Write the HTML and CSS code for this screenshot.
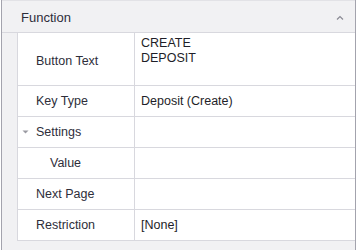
FILE: index.html
```html
<!DOCTYPE html>
<html lang="en">

<head>
    <meta charset="UTF-8">
    <meta name="viewport" content="width=device-width, initial-scale=1.0">
    <title>Function</title>
    <link rel="stylesheet" href="styles.css">
</head>

<body>
    <div class="panel">
        <div class="panel-header">
            <span>Function</span>
            <svg class="collapse" width="8" height="5" viewBox="0 0 8 5">
                <path d="M1 4.5 L4 1.5 L7 4.5" fill="none" stroke="#8a8a94" stroke-width="1.2" />
            </svg>
        </div>

        <div class="panel-body">
            <div class="gutter"></div>
            <div class="rows">
                <div class="row tall">
                    <div class="label">Button Text</div>
                    <div class="value multi">CREATE<br>DEPOSIT</div>
                </div>
                <div class="row">
                    <div class="label">Key Type</div>
                    <div class="value">Deposit (Create)</div>
                </div>
                <div class="row">
                    <div class="label group">
                        <svg class="expander" width="7" height="4" viewBox="0 0 7 4">
                            <path d="M0.5 0.5 L6.5 0.5 L3.5 3.5 Z" fill="#9a9aa2" />
                        </svg>
                        Settings
                    </div>
                    <div class="value"></div>
                </div>
                <div class="row">
                    <div class="label child">Value</div>
                    <div class="value"></div>
                </div>
                <div class="row">
                    <div class="label">Next Page</div>
                    <div class="value"></div>
                </div>
                <div class="row">
                    <div class="label">Restriction</div>
                    <div class="value">[None]</div>
                </div>
            </div>
        </div>

        <div class="panel-footer"></div>
    </div>
</body>

</html>
```

FILE: styles.css
```css
body {
    font-family: "Liberation Sans", Arial, sans-serif;
    font-size: 12.5px;
    color: #2e2e3a;
    background-color: #fff;
    margin: 0;
    padding: 0;
}

.panel {
    width: 355px;
    margin-left: 1px;
    box-sizing: border-box;
    border-left: 1px solid #a3a3ad;
    border-right: 1px solid #a3a3ad;
    background-color: #f1f1f3;
}

.panel-header {
    height: 33px;
    display: flex;
    justify-content: space-between;
    align-items: center;
    padding: 2px 11px 0 19px;
    box-sizing: border-box;
    border-top: 1px solid #e2e2e6;
    border-bottom: 1px solid #d8d8de;
    font-size: 13px;
}

.collapse {
    margin-top: -1px;
}

.panel-body {
    display: flex;
}

.gutter {
    width: 15px;
    flex-shrink: 0;
}

.rows {
    flex: 1;
    background-color: #fff;
}

.row {
    display: flex;
    height: 31px;
    box-sizing: border-box;
    border-bottom: 1px solid #d8d8de;
}

.row.tall {
    height: 53px;
}

.row.tall .label {
    padding-top: 3px;
}

.label {
    width: 118px;
    flex-shrink: 0;
    box-sizing: border-box;
    border-left: 1px solid #d8d8de;
    border-right: 1px solid #d8d8de;
    padding-left: 18px;
    display: flex;
    align-items: center;
}

.label.group {
    padding-left: 4px;
}

.expander {
    margin-right: 7px;
}

.label.child {
    padding-left: 32px;
}

.value {
    flex: 1;
    padding-left: 6px;
    display: flex;
    align-items: center;
    color: #1e1e28;
}

.value.multi {
    display: block;
    padding-top: 3px;
    line-height: 15px;
}

.panel-footer {
    height: 9px;
}
```
